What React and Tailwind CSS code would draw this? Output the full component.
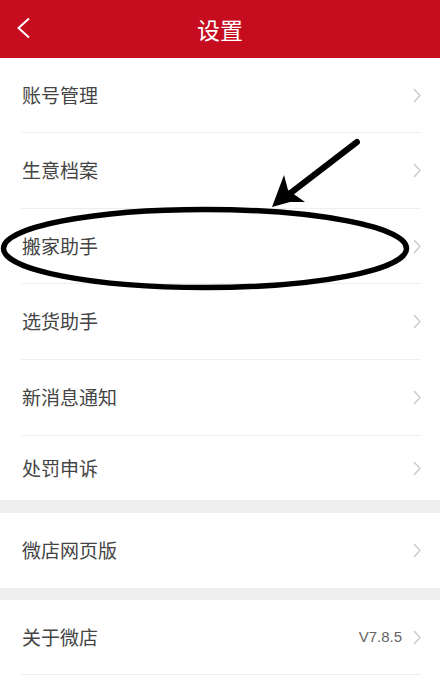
import React from "react";

const font = { fontFamily: '"Noto Sans CJK SC", "Noto Sans", sans-serif' };

const Chevron = () => (
  <svg width="8" height="15" viewBox="0 0 8 15" className="shrink-0">
    <polyline points="1,1 7,7.5 1,14" fill="none" stroke="#c8c8c8" strokeWidth="1.3" />
  </svg>
);

const Row = ({ label, extra, last, h = "h-[75px]" }) => (
  <div className="bg-white pl-[21px] pr-[19px]">
    <div className={`flex items-center justify-between ${h} ${last ? "" : "border-b border-[#eeeeee]"}`}>
      <span className="pl-px text-[19px] text-[#444444]">{label}</span>
      <div className="flex items-center gap-[11px]">
        {extra && (
          <span className="text-[15px] text-[#666666]" style={{ fontFamily: '"Liberation Sans", Arial, sans-serif' }}>
            {extra}
          </span>
        )}
        <Chevron />
      </div>
    </div>
  </div>
);

export default function App() {
  return (
    <div className="relative w-[440px] h-[685px] overflow-hidden bg-white" style={font}>
      <div className="relative flex h-[58px] items-center justify-center bg-[#c60c1f]">
        <svg width="14" height="22" viewBox="0 0 14 22" className="absolute left-[17px] top-[17px]">
          <polyline points="12,1.5 1.5,11 12,20.5" fill="none" stroke="#ffffff" strokeWidth="2" />
        </svg>
        <span className="text-[23px] text-white">设置</span>
      </div>

      <div className="flex flex-col">
        <Row label="账号管理" />
        <Row label="生意档案" h="h-[76px]" />
        <Row label="搬家助手" />
        <Row label="选货助手" h="h-[76px]" />
        <Row label="新消息通知" h="h-[76px]" />
        <Row label="处罚申诉" last h="h-[64px]" />
        <div className="h-[13px] bg-[#efefef]" />
        <Row label="微店网页版" last />
        <div className="h-[12px] bg-[#efefef]" />
        <Row label="关于微店" extra="V7.8.5" />
      </div>

      {/* hand-drawn annotation */}
      <svg className="absolute left-0 top-0 pointer-events-none" width="440" height="685" viewBox="0 0 440 685">
        <ellipse cx="205" cy="248.5" rx="201.5" ry="39" fill="none" stroke="#000" strokeWidth="5.5" />
        <line x1="357" y1="142" x2="288" y2="195" stroke="#000" strokeWidth="6" strokeLinecap="round" />
        <polygon points="272,207 284,175 288,190 305,202 290,202" fill="#000" />
      </svg>
    </div>
  );
}
